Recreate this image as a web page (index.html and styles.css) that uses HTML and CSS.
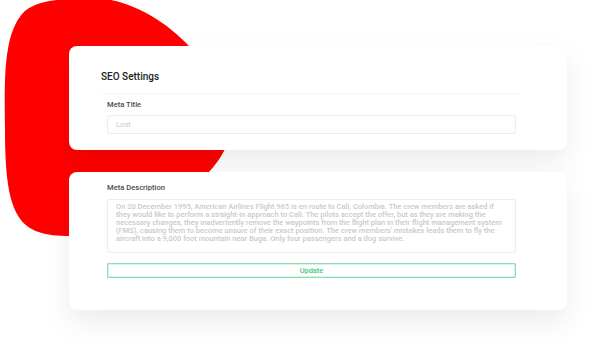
FILE: index.html
```html
<!DOCTYPE html>
<html lang="en">
<head>
    <meta charset="UTF-8">
    <meta name="viewport" content="width=device-width, initial-scale=1.0">
    <title>SEO Settings</title>
    <link rel="stylesheet" href="styles.css">
</head>
<body>
    <div class="stage">
        <svg class="blob" width="240" height="240" viewBox="0 0 240 240">
            <path d="M5 130 C4 70 5 35 22 14 C36 -2 70 -2 105 -1 C170 8 230 80 230 130 C230 170 150 235 70 236 C20 236 5 220 5 130 Z" fill="#ff0000"/>
        </svg>

        <div class="card card-top">
            <h1 class="titulo">SEO Settings</h1>
            <div class="grupo">
                <label class="rotulo" for="meta-title">Meta Title</label>
                <input id="meta-title" class="campo" type="text" placeholder="Lost">
            </div>
        </div>

        <div class="card card-bottom">
            <div class="grupo">
                <label class="rotulo" for="meta-desc">Meta Description</label>
                <textarea id="meta-desc" class="campo area" rows="5">On 20 December 1995, American Airlines Flight 965 is en route to Cali, Colombia. The crew members are asked if
they would like to perform a straight-in approach to Cali. The pilots accept the offer, but as they are making the
necessary changes, they inadvertently remove the waypoints from the flight plan in their flight management system
(FMS), causing them to become unsure of their exact position. The crew members' mistakes leads them to fly the
aircraft into a 9,000 foot mountain near Buga. Only four passengers and a dog survive.</textarea>
                <button class="botao" type="button">Update</button>
            </div>
        </div>
    </div>
</body>
</html>
```

FILE: styles.css
```css
body {
    margin: 0;
    padding: 0;
    background-color: #ffffff;
    font-family: Roboto, "Liberation Sans", Arial, sans-serif;
    color: #333;
}

.stage {
    position: relative;
    width: 590px;
    height: 350px;
    overflow: hidden;
    padding: 46px 0 0 69px;
    box-sizing: border-box;
}

.blob {
    position: absolute;
    left: 0;
    top: 0;
}

.card {
    position: relative;
    width: 498px;
    background: #ffffff;
    border-radius: 8px;
    box-shadow: 0 12px 28px rgba(0, 0, 0, 0.08);
    box-sizing: border-box;
}

.card-top {
    height: 104px;
    padding: 24px 47px 0 32px;
}

.card-bottom {
    height: 138px;
    margin-top: 22px;
    padding: 11px 51px 0 38px;
}

.titulo {
    margin: 0;
    font-size: 10px;
    line-height: 14px;
    font-weight: 500;
    color: #222;
    padding-bottom: 9px;
    border-bottom: 1px solid #f6f6f6;
}

.card-top .grupo {
    padding: 6px 4px 0 6px;
}

.rotulo {
    display: block;
    font-size: 7.6px;
    line-height: 10px;
    font-weight: 500;
    color: #4a4a4a;
}

.campo {
    display: block;
    width: 100%;
    height: 19px;
    margin-top: 5px;
    padding: 0 8px;
    border: 1px solid #ededf0;
    border-radius: 2px;
    box-sizing: border-box;
    font-family: inherit;
    font-size: 7.6px;
    color: #c4c4c4;
    outline: none;
}

.campo::placeholder {
    color: #c8c8c8;
}

.area {
    height: 54px;
    margin-top: 6px;
    padding: 3px 8px 0 8px;
    line-height: 7.9px;
    font-size: 7.5px;
    font-weight: 500;
    color: #cacaca;
    resize: none;
    overflow: hidden;
    white-space: pre;
}

.botao {
    display: block;
    width: 100%;
    height: 15px;
    margin-top: 10px;
    padding: 0;
    appearance: none;
    -webkit-appearance: none;
    background: #ffffff;
    border: 1px solid #8be0ae;
    box-shadow: inset 0 0 0 0.5px #b0ebc9;
    border-radius: 1px;
    font-family: inherit;
    font-size: 7.4px;
    font-weight: 500;
    color: #44c67e;
    cursor: pointer;
}
```
